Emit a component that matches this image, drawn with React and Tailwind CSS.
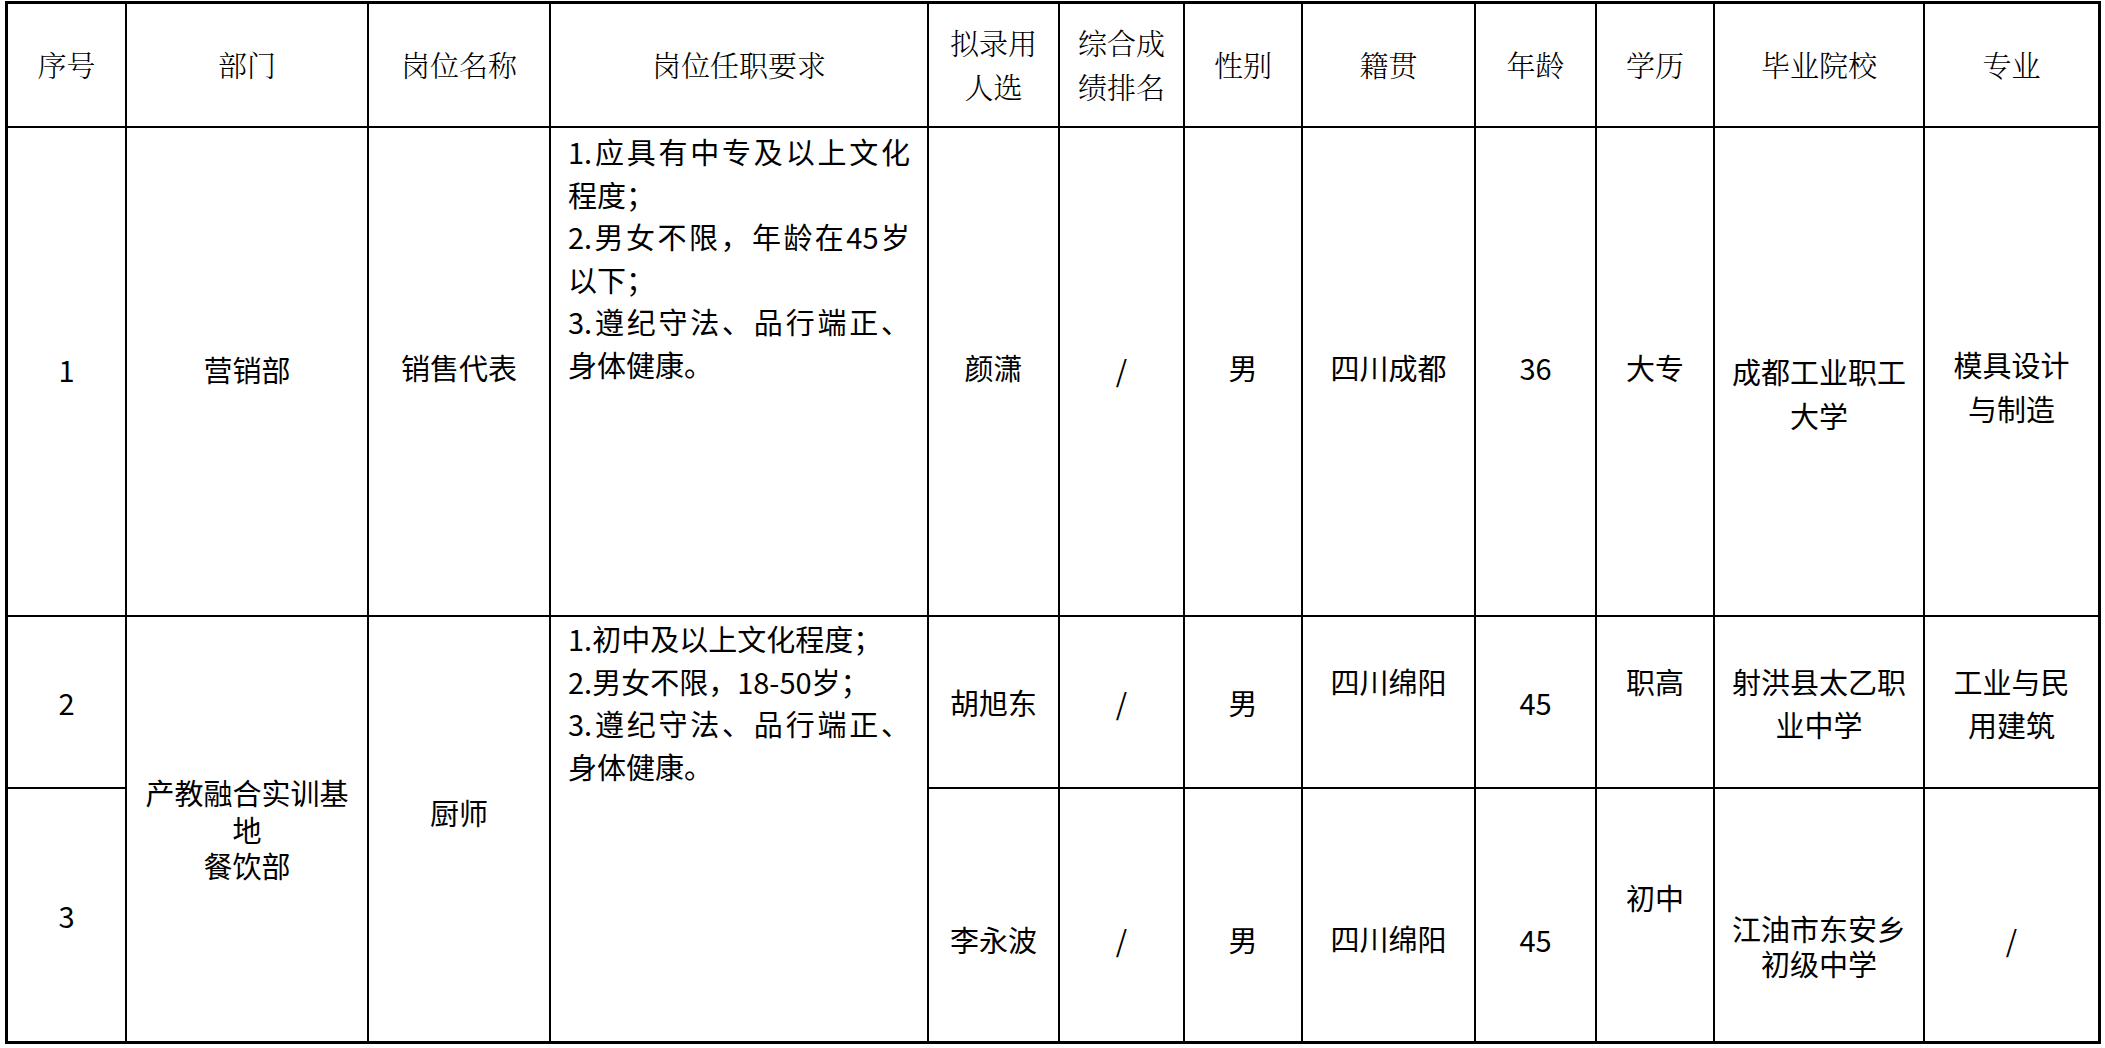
import React from "react";

const body = "font-['Noto_Sans_CJK_SC','Noto_Sans',sans-serif] text-[29px] text-black";
const head = "font-['Noto_Serif_CJK_SC','Noto_Sans_CJK_SC',serif] text-[29px] text-black font-light";

function Cell({ className = "", children }) {
  return <div className={"bg-white flex flex-col items-center whitespace-nowrap " + className}>{children}</div>;
}

function H({ children }) {
  return <Cell className={head + " justify-center leading-[44px]"}>{children}</Cell>;
}

export default function App() {
  return (
    <div className="w-[2105px] h-[1048px] bg-white overflow-hidden">
      <div className="ml-[5px] mt-[1px] w-max grid grid-cols-[117px_240px_180px_376px_129px_123px_116px_171px_119px_116px_208px_173px] grid-rows-[122px_487px_170px_252px] gap-[2px] bg-black border-[3px] border-black">
        {/* header */}
        <H>序号</H>
        <H>部门</H>
        <H>岗位名称</H>
        <H>岗位任职要求</H>
        <H><div>拟录用</div><div>人选</div></H>
        <H><div>综合成</div><div>绩排名</div></H>
        <H>性别</H>
        <H>籍贯</H>
        <H>年龄</H>
        <H>学历</H>
        <H>毕业院校</H>
        <H>专业</H>

        {/* row 1 */}
        <Cell className={body + " justify-center pb-[5px] leading-[44px]"}>1</Cell>
        <Cell className={body + " justify-center pb-[5px] leading-[44px]"}>营销部</Cell>
        <Cell className={body + " justify-center pb-[10px] leading-[44px]"}>销售代表</Cell>
        <Cell className={body + " !items-stretch justify-start pt-[2px] px-[17px] leading-[42.6px]"}>
          <div className="text-justify [text-align-last:justify]">1.应具有中专及以上文化</div>
          <div>程度；</div>
          <div className="text-justify [text-align-last:justify]">2.男女不限，年龄在45岁</div>
          <div>以下；</div>
          <div className="text-justify [text-align-last:justify]">3.遵纪守法、品行端正、</div>
          <div>身体健康。</div>
        </Cell>
        <Cell className={body + " justify-center pb-[10px] leading-[44px]"}>颜潇</Cell>
        <Cell className={body + " justify-center pb-[5px] leading-[44px]"}>/</Cell>
        <Cell className={body + " justify-center pb-[10px] leading-[44px]"}>男</Cell>
        <Cell className={body + " justify-center pb-[10px] leading-[44px]"}>四川成都</Cell>
        <Cell className={body + " justify-center pb-[10px] leading-[44px]"}>36</Cell>
        <Cell className={body + " justify-center pb-[10px] leading-[44px]"}>大专</Cell>
        <Cell className={body + " justify-start pt-[221px] leading-[44px]"}>
          <div>成都工业职工</div>
          <div>大学</div>
        </Cell>
        <Cell className={body + " justify-start pt-[215px] leading-[43.5px]"}>
          <div>模具设计</div>
          <div>与制造</div>
        </Cell>

        {/* row 2 */}
        <Cell className={body + " justify-center leading-[43px]"}>2</Cell>
        <Cell className={body + " row-span-2 justify-center leading-[36.5px]"}>
          <div>产教融合实训基</div>
          <div>地</div>
          <div>餐饮部</div>
        </Cell>
        <Cell className={body + " row-span-2 justify-start pt-[177px] leading-[36px]"}>厨师</Cell>
        <Cell className={body + " row-span-2 !items-stretch justify-start pt-0 px-[17px] leading-[42.5px]"}>
          <div>1.初中及以上文化程度；</div>
          <div>2.男女不限，18-50岁；</div>
          <div className="text-justify [text-align-last:justify]">3.遵纪守法、品行端正、</div>
          <div>身体健康。</div>
        </Cell>
        <Cell className={body + " justify-center leading-[43px]"}>胡旭东</Cell>
        <Cell className={body + " justify-center leading-[43px]"}>/</Cell>
        <Cell className={body + " justify-center leading-[43px]"}>男</Cell>
        <Cell className={body + " justify-start pt-[43px] leading-[43px]"}>四川绵阳</Cell>
        <Cell className={body + " justify-center leading-[43px]"}>45</Cell>
        <Cell className={body + " justify-start pt-[43px] leading-[43px]"}>职高</Cell>
        <Cell className={body + " justify-start pt-[43px] leading-[43px]"}>
          <div>射洪县太乙职</div>
          <div>业中学</div>
        </Cell>
        <Cell className={body + " justify-start pt-[43px] leading-[43px]"}>
          <div>工业与民</div>
          <div>用建筑</div>
        </Cell>

        {/* row 3 */}
        <Cell className={body + " justify-center leading-[43px]"}>3</Cell>
        <Cell className={body + " justify-center pt-[48px] leading-[43px]"}>李永波</Cell>
        <Cell className={body + " justify-center pt-[48px] leading-[43px]"}>/</Cell>
        <Cell className={body + " justify-center pt-[48px] leading-[43px]"}>男</Cell>
        <Cell className={body + " justify-center pt-[46px] leading-[43px]"}>四川绵阳</Cell>
        <Cell className={body + " justify-center pt-[48px] leading-[43px]"}>45</Cell>
        <Cell className={body + " justify-start pt-[90px] leading-[36px]"}>初中</Cell>
        <Cell className={body + " justify-start pt-[122px] leading-[35px]"}>
          <div>江油市东安乡</div>
          <div>初级中学</div>
        </Cell>
        <Cell className={body + " justify-center pt-[48px] leading-[43px]"}>/</Cell>
      </div>
    </div>
  );
}
